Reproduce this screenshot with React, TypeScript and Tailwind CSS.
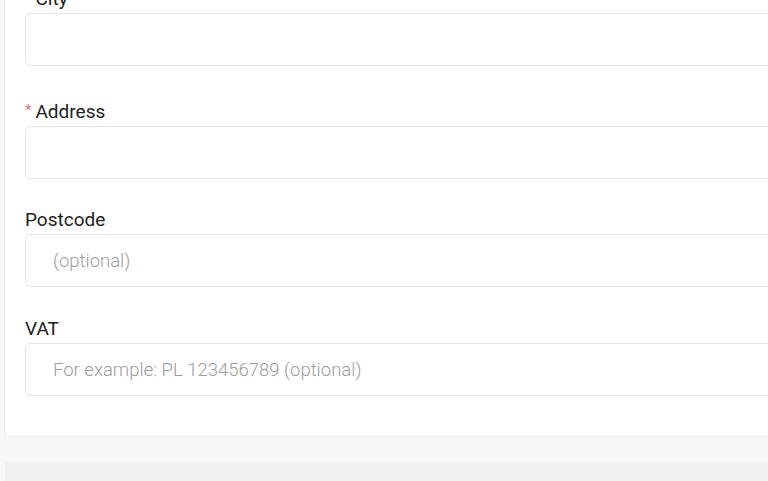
const font = { fontFamily: "Roboto, 'Noto Sans', sans-serif" };

interface FieldProps {
  label: string;
  required?: boolean;
  placeholder?: string;
  className?: string;
}

const Field = ({ label, required, placeholder, className }: FieldProps) => (
  <div className={className}>
    <label className="flex h-[24px] items-center text-[19px] leading-[24px] text-[#212121]">
      {required && (
        <span className="mr-[4px] -mt-[4px] text-[15px] text-[#e57373]">*</span>
      )}
      {label}
    </label>
    <input
      type="text"
      placeholder={placeholder}
      className="mt-[2px] block h-[53px] w-full rounded-[5px] border border-[#e4e4e4] bg-white px-[27px] text-[18.5px] font-light text-[#212121] outline-none placeholder:text-[#9c9c9c]"
    />
  </div>
);

export default function App() {
  return (
    <div className="h-[481px] w-[768px] overflow-hidden bg-[#f8f8f8]" style={font}>
      <div className="-mt-[14px] ml-[4px] w-[800px] rounded-[4px] border border-[#eeeeee] bg-white pb-[40px] pl-[20px] pr-[20px]">
        <Field label="City" required />
        <Field label="Address" required className="mt-[34px]" />
        <Field label="Postcode" placeholder="(optional)" className="mt-[29px]" />
        <Field label="VAT" placeholder="For example: PL 123456789 (optional)" className="mt-[30px]" />
      </div>
      <div className="ml-[5px] mt-[25px] h-[40px] w-[800px] rounded-[4px] bg-[#f1f1f1]" />
    </div>
  );
}
